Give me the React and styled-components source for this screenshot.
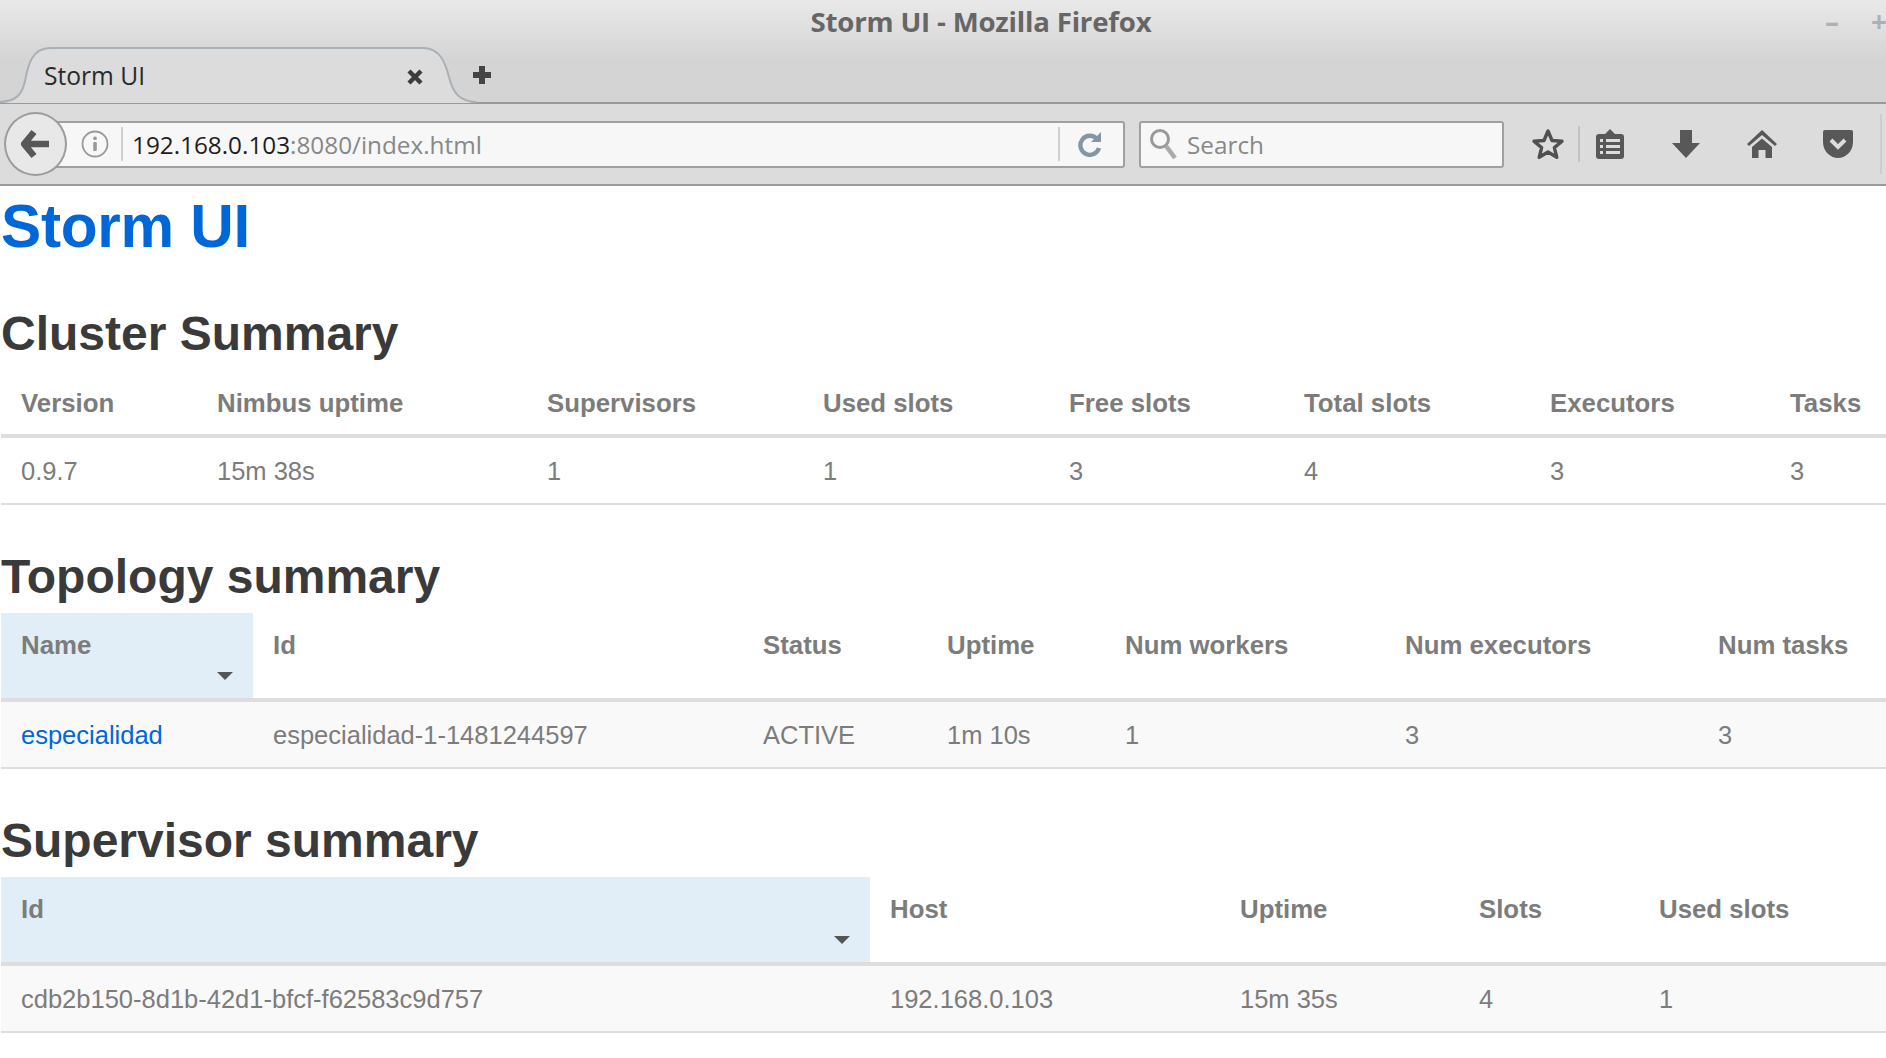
import styled, { createGlobalStyle } from "styled-components";

const Global = createGlobalStyle`
	html, body { margin: 0; padding: 0; background: #fff; overflow: hidden; }
	body { font-family: "Liberation Sans", Arial, sans-serif; }
`;

const Page = styled.div`
	width: 1886px;
	height: 1058px;
	overflow: hidden;
`;

const Chrome = styled.header`
	font-family: "Open Sans", "Noto Sans", sans-serif;
	display: flex;
	flex-direction: column;
`;

const TitleStrip = styled.div`
	height: 104px;
	box-sizing: border-box;
	display: flex;
	flex-direction: column;
	background: linear-gradient(#e9e9e9 0, #d4d4d4 60px, #d4d4d4 100%);
	border-bottom: 2px solid #9a9a9a;
`;

const TitleBar = styled.div`
	height: 47px;
	display: flex;
	align-items: center;
	padding-bottom: 6px;
	box-sizing: border-box;
	position: relative;
	justify-content: center;
	padding-left: 76px;
`;

const WindowTitle = styled.span`
	font-size: 27.6px;
	font-weight: 700;
	color: #666;
	letter-spacing: -0.2px;
`;

const WindowButton = styled.span`
	position: absolute;
	top: 5px;
	left: ${p => p.$x}px;
	font-size: 28px;
	font-weight: 700;
	line-height: 32px;
	color: #b0b0b0;
`;

const TabRow = styled.div`
	height: 55px;
	display: flex;
	align-items: flex-start;
`;

const Tab = styled.div`
	position: relative;
	width: 476px;
	height: 57px;
	box-sizing: border-box;
	padding: 11px 0 0 44px;
	font-size: 24.6px;
	line-height: 36px;
	color: #2a2a2a;
	flex: none;
`;

const TabShape = styled.svg`
	position: absolute;
	left: 0;
	top: 0;
	z-index: 0;
`;

const TabLabel = styled.span`
	position: relative;
`;

const TabIcon = styled.svg`
	position: absolute;
	left: 405px;
	top: 20px;
`;

const NewTab = styled.svg`
	margin: 18px 0 0 -4px;
	flex: none;
`;

const Toolbar = styled.div`
	height: 80px;
	box-sizing: content-box;
	position: relative;
	display: flex;
	align-items: center;
	background: #dcdcdc;
	border-bottom: 2px solid #9a9a9a;
	padding-left: 50px;
`;

const BackButton = styled.div`
	position: absolute;
	left: 4px;
	top: 8px;
	width: 63px;
	height: 64px;
	box-sizing: border-box;
	border-radius: 50%;
	border: 2px solid #9c9c9c;
	background: #e8e8e8;
	display: flex;
	align-items: center;
	justify-content: center;
	z-index: 1;
`;

const InputBox = styled.div`
	height: 47px;
	box-sizing: border-box;
	width: ${p => p.$w}px;
	margin-left: ${p => p.$ml || 0}px;
	flex: none;
	display: flex;
	align-items: center;
	background: #f7f7f7;
	border: 2px solid #a0a0a0;
	border-radius: 3px;
	font-size: 24.3px;
	color: #888;
`;

const InfoIcon = styled.svg`
	margin-left: 29px;
	flex: none;
`;

const UrlDivider = styled.span`
	width: 2px;
	height: 34px;
	background: #cfcfcf;
	margin-left: ${p => p.$ml}px;
	flex: none;
`;

const Url = styled.span`
	margin-left: 9px;
	width: 926px;
	flex: none;
	white-space: nowrap;
	overflow: hidden;
	b { font-weight: 400; color: #1e1e1e; }
`;

const ReloadIcon = styled.svg`
	margin-left: 17px;
	flex: none;
`;

const SearchIcon = styled.svg`
	margin-left: 8px;
	flex: none;
`;

const SearchText = styled.span`
	margin-left: 10px;
`;

const ToolIcons = styled.div`
	display: flex;
	align-items: center;
	margin-left: 27px;
`;

const ToolIcon = styled.svg`
	margin-left: ${p => p.$ml || 0}px;
	flex: none;
`;

const ToolDivider = styled.span`
	width: 2px;
	height: 36px;
	background: #c2c2c2;
	margin-left: 13px;
	flex: none;
`;

const ToolEdge = styled.span`
	width: 2px;
	height: 60px;
	background: #cccccc;
	margin-left: 26px;
	flex: none;
`;

const Content = styled.main`
	padding-left: 1px;
`;

const Heading = styled.h1`
	margin: 5px 0 0;
	font-size: 60.3px;
	line-height: 70px;
	font-weight: 700;
	color: #0067d8;
	letter-spacing: -0.3px;
`;

const SectionTitle = styled.h2`
	margin: ${p => p.$top}px 0 ${p => p.$bottom}px;
	font-size: 48px;
	line-height: 56px;
	font-weight: 700;
	color: #3a3a3a;
`;

const Table = styled.table`
	width: 1885px;
	table-layout: fixed;
	border-collapse: separate;
	border-spacing: 0;
	font-size: 25.5px;
	color: #7c7c7c;
`;

const HeadCell = styled.th`
	position: relative;
	text-align: left;
	vertical-align: top;
	padding: 17px 20px ${p => p.$pb}px;
	font-size: 25.8px;
	line-height: 30px;
	font-weight: 700;
	border-bottom: 4px solid #ddd;
	background: ${p => (p.$sorted ? "#e1eef7" : "transparent")};
`;

const SortArrow = styled.span`
	position: absolute;
	right: 20px;
	bottom: 18px;
	border-left: 8px solid transparent;
	border-right: 8px solid transparent;
	border-top: 8px solid #555;
`;

const Cell = styled.td`
	height: 67px;
	padding: 2px 20px 0;
	box-sizing: border-box;
	border-bottom: 2px solid #ddd;
	background: ${p => (p.$striped ? "#f9f9f9" : "transparent")};
	white-space: nowrap;
`;

const RowLink = styled.a`
	color: #0067d8;
	text-decoration: none;
`;

function DataTable({ columns, rows, sortedIndex, striped }) {
	const bottomPad = sortedIndex === undefined ? 16 : 38;
	return (
		<Table>
			<colgroup>
				{columns.map(c => (
					<col key={c.label} style={{ width: c.width }} />
				))}
			</colgroup>
			<thead>
				<tr>
					{columns.map((c, i) => (
						<HeadCell key={c.label} $pb={bottomPad} $sorted={i === sortedIndex}>
							{c.label}
							{i === sortedIndex && <SortArrow />}
						</HeadCell>
					))}
				</tr>
			</thead>
			<tbody>
				{rows.map((row, r) => (
					<tr key={r}>
						{row.map((v, i) => (
							<Cell key={i} $striped={striped}>
								{v}
							</Cell>
						))}
					</tr>
				))}
			</tbody>
		</Table>
	);
}

const clusterCols = [
	{ label: "Version", width: 196 },
	{ label: "Nimbus uptime", width: 330 },
	{ label: "Supervisors", width: 276 },
	{ label: "Used slots", width: 246 },
	{ label: "Free slots", width: 235 },
	{ label: "Total slots", width: 246 },
	{ label: "Executors", width: 240 },
	{ label: "Tasks", width: 116 },
];

const topologyCols = [
	{ label: "Name", width: 252 },
	{ label: "Id", width: 490 },
	{ label: "Status", width: 184 },
	{ label: "Uptime", width: 178 },
	{ label: "Num workers", width: 280 },
	{ label: "Num executors", width: 313 },
	{ label: "Num tasks", width: 188 },
];

const supervisorCols = [
	{ label: "Id", width: 869 },
	{ label: "Host", width: 350 },
	{ label: "Uptime", width: 239 },
	{ label: "Slots", width: 180 },
	{ label: "Used slots", width: 247 },
];

export default function App() {
	return (
		<Page>
			<Global />
			<Chrome>
				<TitleStrip>
					<TitleBar>
						<WindowTitle>Storm UI - Mozilla Firefox</WindowTitle>
						<WindowButton $x={1825}>–</WindowButton>
						<WindowButton $x={1871}>+</WindowButton>
					</TitleBar>
					<TabRow>
						<Tab>
							<TabShape width="476" height="57" viewBox="0 0 476 57">
								<path
									d="M0 56 C16 55 22 48 25 34 C28 18 32 1 50 1 L423 1 C439 1 445 14 449 30 C453 46 459 55 476 56 Z"
									fill="#dcdcdc"
								/>
								<path
									d="M0 55 C16 54 22 48 25 34 C28 18 32 1 50 1 L423 1 C439 1 445 14 449 30 C453 46 459 54 476 55"
									fill="none"
									stroke="#a9b0b6"
									strokeWidth="2"
								/>
							</TabShape>
							<TabLabel>Storm UI</TabLabel>
							<TabIcon width="20" height="20" viewBox="0 0 20 20">
								<path d="M4 4 L16 16 M16 4 L4 16" stroke="#3c3c3c" strokeWidth="4.5" />
							</TabIcon>
						</Tab>
						<NewTab width="20" height="20" viewBox="0 0 20 20">
							<path d="M7 1 H13 V7 H19 V13 H13 V19 H7 V13 H1 V7 H7 Z" fill="#444" />
						</NewTab>
					</TabRow>
				</TitleStrip>
				<Toolbar>
					<BackButton>
						<svg width="30" height="32" viewBox="0 0 30 32">
							<path
								d="M13 4 L3 16 L13 28 M5 16 H28"
								fill="none"
								stroke="#585858"
								strokeWidth="6.5"
								strokeLinejoin="round"
							/>
						</svg>
					</BackButton>
					<InputBox $w={1075}>
						<InfoIcon width="28" height="28" viewBox="0 0 28 28">
							<circle cx="14" cy="14" r="12.5" fill="none" stroke="#999" strokeWidth="1.8" />
							<rect x="12.2" y="12" width="3.6" height="9" rx="1" fill="#999" />
							<rect x="12.2" y="6.5" width="3.6" height="3.4" rx="1.5" fill="#999" />
						</InfoIcon>
						<UrlDivider $ml={12} />
						<Url>
							<b>192.168.0.103</b>:8080/index.html
						</Url>
						<UrlDivider $ml={0} />
						<ReloadIcon width="26" height="26" viewBox="0 0 26 26">
							<path
								d="M20 8 A9.5 9.5 0 1 0 22 17"
								fill="none"
								stroke="#8496a6"
								strokeWidth="4.4"
							/>
							<path d="M14 11 L24 11 L24 1 Z" fill="#8496a6" />
						</ReloadIcon>
					</InputBox>
					<InputBox $w={365} $ml={14}>
						<SearchIcon width="28" height="32" viewBox="0 0 28 32">
							<circle cx="11" cy="11" r="8.5" fill="none" stroke="#999" strokeWidth="3" />
							<path d="M17 18 L26 30" stroke="#aaa" strokeWidth="4.5" />
						</SearchIcon>
						<SearchText>Search</SearchText>
					</InputBox>
					<ToolIcons>
						<ToolIcon width="34" height="32" viewBox="0 0 34 32">
							<path
								d="M17 3 L21 12.5 L31 13.2 L23.4 19.6 L25.8 29.3 L17 24 L8.2 29.3 L10.6 19.6 L3 13.2 L13 12.5 Z"
								fill="none"
								stroke="#505050"
								strokeWidth="3.4"
								strokeLinejoin="round"
							/>
						</ToolIcon>
						<ToolDivider />
						<ToolIcon $ml={15} width="30" height="32" viewBox="0 0 30 32">
							<path d="M10 6 L15 1 L20 6 H26 Q29 6 29 9 V28 Q29 31 26 31 H4 Q1 31 1 28 V9 Q1 6 4 6 Z" fill="#585858" />
							<path
								d="M5 11 H8 V14 H5 Z M11 11 H25 V14 H11 Z M5 17 H8 V20 H5 Z M11 17 H25 V20 H11 Z M5 23 H8 V26 H5 Z M11 23 H25 V26 H11 Z"
								fill="#dcdcdc"
							/>
						</ToolIcon>
						<ToolIcon $ml={46} width="30" height="30" viewBox="0 0 30 30">
							<path d="M9 1 H21 V14 H29 L15 29 L1 14 H9 Z" fill="#585858" />
						</ToolIcon>
						<ToolIcon $ml={45} width="32" height="30" viewBox="0 0 32 30">
							<path d="M16 1 L31 15 L29 17 L16 6 L3 17 L1 15 Z" fill="#585858" />
							<path d="M16 9.5 L26 18 V29 H19.5 V21 H12.5 V29 H6 V18 Z" fill="#585858" />
						</ToolIcon>
						<ToolIcon $ml={44} width="32" height="30" viewBox="0 0 32 30">
							<path d="M3 1 H29 Q31 1 31 3 V13 C31 23 23 29 16 29 C9 29 1 23 1 13 V3 Q1 1 3 1 Z" fill="#585858" />
							<path d="M9 11 L16 18 L23 11" fill="none" stroke="#dcdcdc" strokeWidth="4" />
						</ToolIcon>
						<ToolEdge />
					</ToolIcons>
				</Toolbar>
			</Chrome>
			<Content>
				<Heading>Storm UI</Heading>
				<SectionTitle $top={45} $bottom={9}>Cluster Summary</SectionTitle>
				<DataTable
					columns={clusterCols}
					rows={[["0.9.7", "15m 38s", "1", "1", "3", "4", "3", "3"]]}
				/>
				<SectionTitle $top={44} $bottom={8}>Topology summary</SectionTitle>
				<DataTable
					columns={topologyCols}
					sortedIndex={0}
					striped
					rows={[
						[
							<RowLink href="#" key="name">especialidad</RowLink>,
							"especialidad-1-1481244597",
							"ACTIVE",
							"1m 10s",
							"1",
							"3",
							"3",
						],
					]}
				/>
				<SectionTitle $top={44} $bottom={8}>Supervisor summary</SectionTitle>
				<DataTable
					columns={supervisorCols}
					sortedIndex={0}
					striped
					rows={[["cdb2b150-8d1b-42d1-bfcf-f62583c9d757", "192.168.0.103", "15m 35s", "4", "1"]]}
				/>
			</Content>
		</Page>
	);
}
